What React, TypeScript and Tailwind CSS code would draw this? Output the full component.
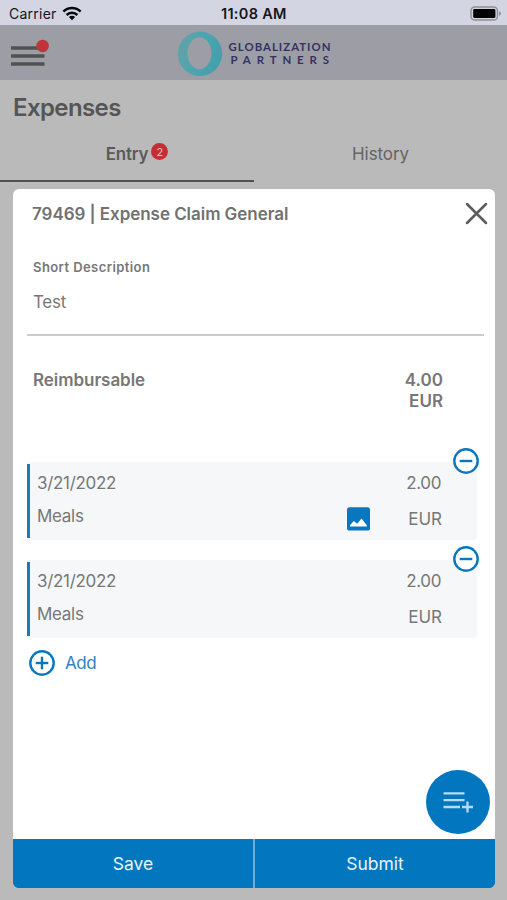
import { ReactNode } from 'react'

const EXPENSES = [
  { date: '3/21/2022', category: 'Meals', amount: '2.00', currency: 'EUR', hasImage: true },
  { date: '3/21/2022', category: 'Meals', amount: '2.00', currency: 'EUR', hasImage: false },
]

const Logo = () => {
  return (
    <svg width="156" height="46" viewBox="0 0 156 46" aria-label="Globalization Partners">
      <defs>
        <linearGradient id="ring" x1="0" y1="0.3" x2="1" y2="0.7">
          <stop offset="0" stopColor="#62a3a8" />
          <stop offset="0.5" stopColor="#4aa5ae" />
          <stop offset="1" stopColor="#42a0ab" />
        </linearGradient>
      </defs>
      <path
        fillRule="evenodd"
        fill="url(#ring)"
        d="M23 1.5a22.2 22.2 0 1 1 0 44.4a22.2 22.2 0 1 1 0-44.4ZM22.4 7.3a12 16 0 1 0 0 32a12 16 0 1 0 0-32Z"
      />
      <g fill="#35325f" fontFamily="Lato, sans-serif" fontWeight="700" fontSize="11.4">
        <text x="51.5" y="20.8" textLength="102">
          GLOBALIZATION
        </text>
        <text x="53.5" y="34" textLength="98.5">
          PARTNERS
        </text>
      </g>
    </svg>
  )
}

const WifiIcon = () => {
  return (
    <svg width="20" height="15" viewBox="0 0 20 15" fill="none" stroke="#08090d" strokeWidth="2.6">
      <path d="M1.4 5.6a12.2 12.2 0 0 1 17.2 0" />
      <path d="M4.6 9a7.7 7.7 0 0 1 10.8 0" />
      <path d="M10 14.2 6.9 11.1a4.4 4.4 0 0 1 6.2 0Z" fill="#08090d" stroke="none" />
    </svg>
  )
}

const BatteryIcon = () => {
  return (
    <svg width="32" height="15" viewBox="0 0 32 15">
      <rect x="1" y="1" width="26.5" height="13" rx="3.8" fill="#cfd0d8" stroke="#8f9098" strokeWidth="1.4" />
      <rect x="3.2" y="3" width="22.2" height="9" rx="1.4" fill="#020204" />
      <path d="M29 5.2v4.6c1.2-.4 1.9-1.3 1.9-2.3s-.7-1.9-1.9-2.3Z" fill="#8f9098" />
    </svg>
  )
}

const CircleIcon = ({ plus }: { plus?: boolean }) => {
  return (
    <svg width="26" height="26" viewBox="0 0 26 26" fill="none" stroke="#0a77bd" strokeWidth="2.4">
      <circle cx="13" cy="13" r="11.7" fill="#fff" />
      <path d="M6.7 13h12.6" />
      {plus && <path d="M13 6.7v12.6" />}
    </svg>
  )
}

const ImageIcon = () => {
  return (
    <svg width="24" height="24" viewBox="0 0 24 24">
      <rect x="0" y="0.3" width="23" height="23.2" rx="2.6" fill="#0877bf" />
      <path d="M3 19.4V18.2l3.8-4.2 3.4 2.8 4.3-5.3 5.3 6.7v1.2Z" fill="#fff" />
    </svg>
  )
}

const AddListIcon = () => {
  return (
    <svg width="32" height="24" viewBox="0 0 32 24" fill="none" stroke="#b9dbf1" strokeWidth="2.3">
      <path d="M1.5 3.3h21M1.5 10.1h21M1.5 17h16.5" />
      <path d="M25.5 11.5v11M20 17h11" />
    </svg>
  )
}

const StatusBar = () => {
  return (
    <div className="flex h-[25px] items-center bg-[#d3d5e2] text-[#15161c]">
      <div className="flex w-[221px] items-center gap-[5px] pl-[9px] pt-[2px] text-[14px]">
        <span className="tracking-[0.25px]">Carrier</span>
        <WifiIcon />
      </div>
      <span className="whitespace-nowrap pt-[2px] text-[14.5px] font-semibold tracking-[0.3px]">11:08 AM</span>
      <div className="flex flex-1 justify-end pr-[5px] pt-[1px]">
        <BatteryIcon />
      </div>
    </div>
  )
}

const Header = () => {
  return (
    <header className="flex h-[55px] shrink-0 bg-[#9c9da5]">
      <div className="w-[177px] pl-[11px] pt-[14px]">
        <svg width="40" height="28" viewBox="0 0 40 28">
          <path d="M0 9h33.5M0 17h33.5M0 25h33.5" stroke="#50524f" strokeWidth="3.6" />
          <circle cx="31.6" cy="7" r="6.2" fill="#c23338" />
        </svg>
      </div>
      <div className="pt-[5px]">
        <Logo />
      </div>
    </header>
  )
}

const Tabs = () => {
  return (
    <nav className="flex h-[50px] text-[17px] leading-[22px] text-[#646464]">
      <div className="flex w-[254px] items-start justify-center gap-[3px] border-b-[2px] border-[#515151] pl-[20px] pt-[11px]">
        <span className="font-semibold tracking-[-0.2px] text-[#5a5a5a]">Entry</span>
        <span className="flex size-[17px] items-center justify-center rounded-full bg-[#c52f34] text-[11px] text-[#e5c3c3]">
          2
        </span>
      </div>
      <div className="flex-1 pt-[11px] text-center tracking-[-0.1px]">History</div>
    </nav>
  )
}

const ExpenseRow = ({ date, category, amount, currency, hasImage }: (typeof EXPENSES)[number]) => {
  return (
    <div className="relative flex h-[78px] w-[450px] rounded-r-[4px] bg-[#f5f7f9]">
      <div className="mt-[2px] h-[74px] w-[3px] bg-[#1b79bd]" />
      <div className="flex flex-1 flex-col gap-[11px] pl-[7px] pt-[10px] tracking-[-0.3px]">
        <span>{date}</span>
        <span>{category}</span>
      </div>
      <div className="w-[52px] pt-[45px]">{hasImage && <ImageIcon />}</div>
      <div className="flex w-[78px] flex-col items-end gap-[14px] pr-[35px] pt-[10px]">
        <span className="pr-[1px] tracking-[-0.4px]">{amount}</span>
        <span>{currency}</span>
      </div>
      <button className="absolute -right-[2px] -top-[14px]">
        <CircleIcon />
      </button>
    </div>
  )
}

const ActionButton = ({ children, className = '' }: { children: ReactNode; className?: string }) => {
  return (
    <button className={`flex-1 bg-[#0277bf] pt-[1px] text-[17.5px] text-[#e8f4fc] ${className}`}>{children}</button>
  )
}

const ClaimModal = () => {
  return (
    <section className="relative mx-[13px] mt-[7px] flex h-[699px] w-[482px] flex-col overflow-hidden rounded-[6px] bg-white text-[#777]">
      <div className="flex h-[66px] items-start justify-between pl-[19px] pr-[7px] pt-[13px]">
        <h2 className="pt-[1px] text-[17px] font-semibold leading-[23px] tracking-[-0.05px] text-[#717171]">
          79469 | Expense Claim General
        </h2>
        <svg width="23" height="23" viewBox="0 0 23 23" stroke="#5c5c5c" strokeWidth="2.5" strokeLinecap="round">
          <path d="M2 2l19 19M21 2 2 21" />
        </svg>
      </div>
      <div className="ml-[14px] mr-[11px] h-[81px] border-b-2 border-[#cbcbcb] pl-[6px]">
        <div className="pt-[2px] text-[13px] font-semibold leading-[20px] tracking-[0.43px]">Short Description</div>
        <div className="pt-[14px] text-[17px] leading-[22px] tracking-[-0.3px]">Test</div>
      </div>
      <div className="flex h-[126px] justify-between pl-[20px] pr-[52px] pt-[34px] text-[17px] font-semibold leading-[21px]">
        <span className="tracking-[-0.05px]">Reimbursable</span>
        <span className="w-[50px] text-right">4.00 EUR</span>
      </div>
      <div className="flex flex-col gap-[20px] pl-[14px] text-[17px] leading-[22px]">
        {EXPENSES.map((expense, i) => (
          <ExpenseRow key={i} {...expense} />
        ))}
      </div>
      <div className="mt-[11px] flex items-center gap-[10px] pl-[16px] text-[17px] tracking-[-0.4px] text-[#2f82c4]">
        <CircleIcon plus />
        <span className="pt-[2px]">Add</span>
      </div>
      <button className="absolute bottom-[54px] right-[5px] flex size-[64px] items-center justify-center rounded-full bg-[#0277bf]">
        <AddListIcon />
      </button>
      <div className="mt-auto flex h-[49px] bg-[#0277bf]">
        <ActionButton className="border-r-2 border-[#69aedb]">Save</ActionButton>
        <ActionButton>Submit</ActionButton>
      </div>
    </section>
  )
}

export default function App() {
  return (
    <main className="flex h-[900px] w-[507px] flex-col overflow-hidden bg-[#bababa] font-['Inter',sans-serif]">
      <StatusBar />
      <Header />
      <h1 className="h-[52px] pl-[13px] pt-[12px] text-[24px] font-semibold leading-[32px] tracking-[-0.6px] text-[#555]">
        Expenses
      </h1>
      <Tabs />
      <ClaimModal />
    </main>
  )
}
